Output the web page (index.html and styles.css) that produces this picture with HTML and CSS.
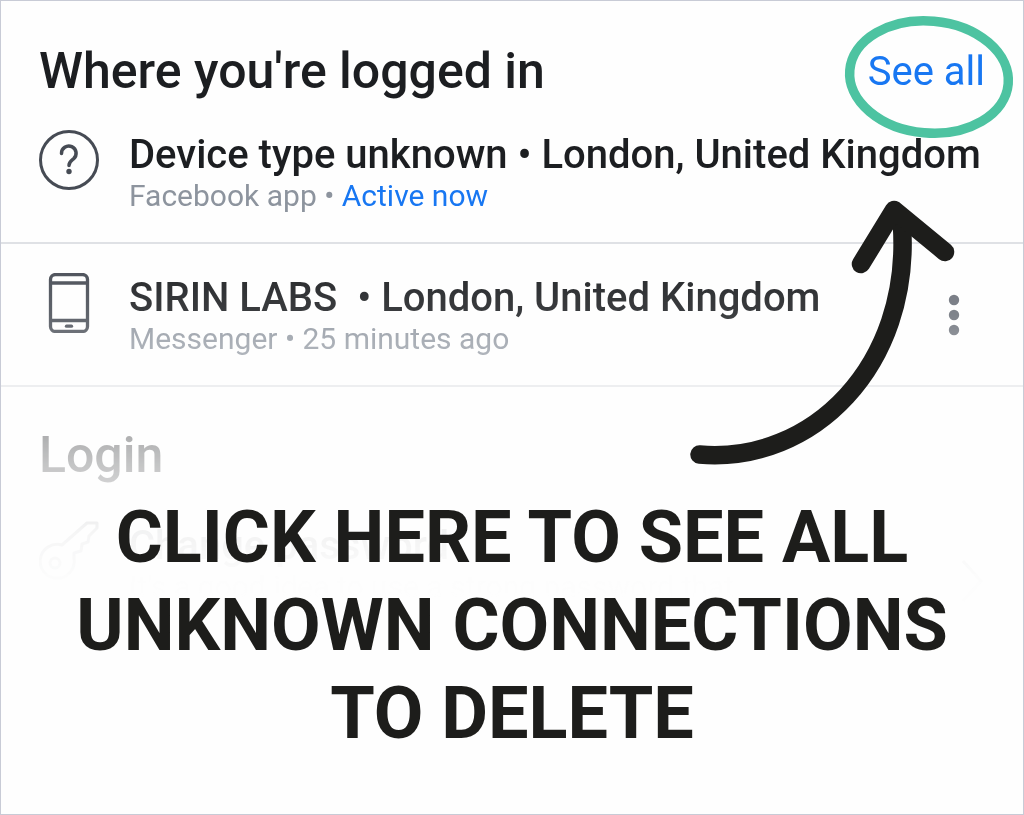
FILE: index.html
```html
<!DOCTYPE html>
<html lang="en">

<head>
    <meta charset="UTF-8">
    <meta name="viewport" content="width=device-width, initial-scale=1.0">
    <title>Where you're logged in</title>
    <link rel="stylesheet" href="styles.css">
</head>

<body>
    <main class="page">
        <div class="settings">
            <section class="sessions">
                <header class="section-header">
                    <h1 class="section-title">Where you're logged in</h1>
                    <div class="see-all">
                        <a class="see-all-link" href="#all">See all</a>
                        <!-- green ring -->
                        <svg class="ring" viewBox="0 0 176 130" aria-hidden="true">
                            <ellipse cx="88" cy="65" rx="79.5" ry="56" transform="rotate(5 88 65)" fill="none" stroke="#4dc3a1" stroke-width="9.5" />
                        </svg>
                    </div>
                </header>

                <div class="row">
                    <svg class="row-icon" viewBox="0 0 60 60" aria-hidden="true">
                        <circle cx="30" cy="30" r="28.5" fill="none" stroke="#464b54" stroke-width="3" />
                        <path d="M22.500 23.500a7.300 7.300 0 1 1 12 5.400c-2.800 2.200-4.500 3-4.500 6.600" fill="none" stroke="#464b54" stroke-width="3.500" stroke-linecap="round" />
                        <circle cx="30" cy="41.500" r="2.700" fill="#464b54" />
                    </svg>
                    <div class="row-text">
                        <h2 class="row-title">Device type unknown • London, United Kingdom</h2>
                        <p class="row-info">Facebook app • <span class="active">Active now</span></p>
                    </div>
                </div>

                <div class="row">
                    <svg class="row-icon" viewBox="0 0 60 60" aria-hidden="true">
                        <g fill="none" stroke="#464b54" stroke-width="3.300">
                            <rect x="11.500" y="1.500" width="37" height="57" rx="5" />
                            <path d="M11.500 10h37M11.500 47.500h37" />
                            <path d="M27.500 53.200h5" stroke-linecap="round" />
                        </g>
                    </svg>
                    <div class="row-text">
                        <h2 class="row-title">SIRIN LABS &nbsp;• London, United Kingdom</h2>
                        <p class="row-info">Messenger • 25 minutes ago</p>
                    </div>
                    <button class="more" type="button" aria-label="More options">
                        <svg class="more-icon" viewBox="0 0 12 42" aria-hidden="true">
                            <circle cx="6" cy="6" r="5.200" />
                            <circle cx="6" cy="21" r="5.200" />
                            <circle cx="6" cy="36" r="5.200" />
                        </svg>
                    </button>
                </div>
            </section>

            <section class="login">
                <h1 class="section-title">Login</h1>
                <div class="row">
                    <svg class="row-icon" viewBox="0 0 60 60" aria-hidden="true">
                        <g fill="none" stroke="#4b4f57" stroke-width="3" stroke-linejoin="round">
                            <path d="M48 2L23 24a17 17 0 1 0 12 14v-6l7-2 1-7 6-2 1-6 8-8V2z" />
                            <circle cx="16" cy="42" r="5" />
                        </g>
                    </svg>
                    <div class="row-text">
                        <h2 class="row-title">Change password</h2>
                        <p class="row-info">It's a good idea to use a strong password that</p>
                    </div>
                    <svg class="chevron" viewBox="0 0 24 48" aria-hidden="true">
                        <path d="M2 4l18 20L2 44" fill="none" stroke="#4b4f57" stroke-width="3" />
                    </svg>
                </div>
            </section>
        </div>

        <svg class="arrow" viewBox="0 0 280 280" aria-hidden="true">
            <g fill="none" stroke="#1d1d1b" stroke-width="18.500" stroke-linecap="round" stroke-linejoin="round">
                <path d="M18.500 264.500C132 274 230 175 221 36" />
                <path d="M180 74L213 20L264 62" />
            </g>
        </svg>

        <p class="caption">Click here to see all unknown connections to delete</p>
    </main>
</body>

</html>
```
FILE: styles.css
```css
* {
    box-sizing: border-box;
}

body {
    margin: 0;
    font-family: Roboto, "Liberation Sans", Arial, sans-serif;
    background-color: #fefefe;
    color: #1c1e21;
}

h1,
h2,
p {
    margin: 0;
}

.page {
    position: relative;
    min-height: 100vh;
    border: 1px solid #c8cbd6;
    overflow: hidden;
}

/* the lower settings fade out behind the caption */
.settings {
    -webkit-mask-image: linear-gradient(#000 240px, rgba(0, 0, 0, 0.86) 315px, rgba(0, 0, 0, 0.33) 440px, rgba(0, 0, 0, 0.05) 530px, rgba(0, 0, 0, 0.01) 575px, transparent 610px);
    mask-image: linear-gradient(#000 240px, rgba(0, 0, 0, 0.86) 315px, rgba(0, 0, 0, 0.33) 440px, rgba(0, 0, 0, 0.05) 530px, rgba(0, 0, 0, 0.01) 575px, transparent 610px);
}

.section-header {
    display: flex;
    justify-content: space-between;
    align-items: flex-end;
    padding: 40px 38px 0;
}

.section-title {
    font-size: 50px;
    line-height: 60px;
    font-weight: 500;
}

.see-all {
    position: relative;
    font-size: 40px;
    line-height: 58px;
}

.see-all-link,
.active {
    color: #1877f2;
    text-decoration: none;
}

.ring {
    position: absolute;
    top: -31px;
    right: -32px;
    width: 176px;
    height: 130px;
    pointer-events: none;
}

.row {
    display: flex;
    gap: 30px;
    padding: 29px 38px 28px;
}

.sessions .row {
    border-bottom: 2px solid #dfe1e5;
}

.row-icon {
    flex: none;
    width: 60px;
    height: 60px;
}

.row-text {
    flex: 1;
    padding-top: 2px;
    white-space: nowrap;
}

.row-title {
    font-size: 40px;
    line-height: 46px;
    font-weight: 500;
}

.row-info {
    font-size: 30px;
    line-height: 36px;
    color: #8d949e;
}

.more {
    align-self: center;
    padding: 0 25px;
    border: none;
    background: none;
    cursor: pointer;
}

.more-icon {
    display: block;
    width: 12px;
    height: 42px;
    fill: #6b7079;
}

.login {
    padding-top: 38px;
}

.login .section-title {
    padding: 0 38px;
}

.login .row {
    padding-top: 36px;
}

.chevron {
    align-self: flex-end;
    width: 24px;
    height: 48px;
}

.arrow {
    position: absolute;
    top: 189px;
    right: 62px;
    width: 280px;
    height: 280px;
}

.caption {
    position: absolute;
    top: 493px;
    left: 0;
    right: 0;
    padding: 0 40px;
    font-size: 72px;
    line-height: 88px;
    font-weight: 700;
    text-align: center;
    text-transform: uppercase;
    color: #1d1d1b;
}
```
